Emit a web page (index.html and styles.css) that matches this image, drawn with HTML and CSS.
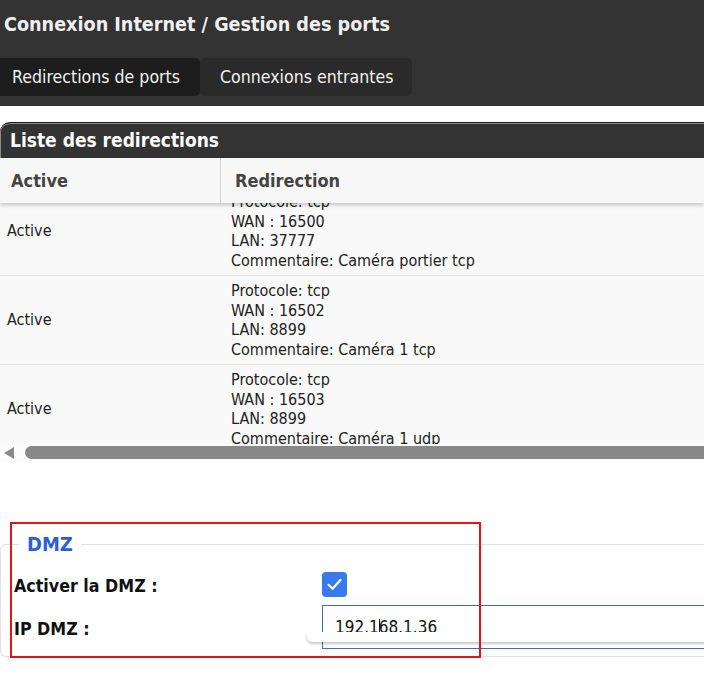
FILE: index.html
```html
<!DOCTYPE html>
<html lang="fr">
<head>
<meta charset="utf-8">
<title>Gestion des ports</title>
<link rel="stylesheet" href="styles.css">
</head>
<body>
<header class="topbar">
  <h1 class="title">Connexion Internet / Gestion des ports</h1>
  <nav class="tabs">
    <div class="tab tab-active">Redirections de ports</div>
    <div class="tab tab-other">Connexions entrantes</div>
  </nav>
</header>

<section class="panel">
  <div class="panel-head">Liste des redirections</div>
  <div class="thead">
    <div class="th th-active">Active</div>
    <div class="th th-redir">Redirection</div>
  </div>
  <div class="tbody-view">
    <div class="rows">
      <div class="row">
        <div class="cell-active">Active</div>
        <div class="cell-redir">Protocole: tcp<br>WAN : 16500<br>LAN: 37777<br>Commentaire: Caméra portier tcp</div>
      </div>
      <div class="row">
        <div class="cell-active">Active</div>
        <div class="cell-redir">Protocole: tcp<br>WAN : 16502<br>LAN: 8899<br>Commentaire: Caméra 1 tcp</div>
      </div>
      <div class="row">
        <div class="cell-active">Active</div>
        <div class="cell-redir">Protocole: tcp<br>WAN : 16503<br>LAN: 8899<br>Commentaire: Caméra 1 udp</div>
      </div>
    </div>
  </div>
  <div class="hscroll">
    <span class="hs-arrow"></span>
    <span class="hs-thumb"></span>
  </div>
</section>

<fieldset class="dmz">
  <legend class="dmz-legend">DMZ</legend>
  <div class="dmz-grid">
    <div class="dmz-label">Activer la DMZ :</div>
    <div class="dmz-control">
      <span class="checkbox">
        <svg width="25" height="25" viewBox="0 0 25 25"><path d="M6.5 12.8 L10.6 16.8 L18.6 7.8" fill="none" stroke="#fff" stroke-width="2.2" stroke-linecap="round" stroke-linejoin="round"/></svg>
      </span>
    </div>
    <div class="dmz-label">IP DMZ :</div>
    <div class="dmz-control">
      <div class="input-wrap">
        <div class="ip-input">192.1<span class="caret"></span>68.1.36</div>
        <div class="autocomplete"></div>
      </div>
    </div>
  </div>
</fieldset>

<div class="annot"></div>
</body>
</html>
```
FILE: styles.css
```css
html {
  overflow: hidden;
}
html, body {
  margin: 0;
  background: #fff;
}
body {
  position: relative;
  min-height: 683px;
  font-family: "DejaVu Sans Condensed", "DejaVu Sans", sans-serif;
  color: #222;
}

.topbar {
  background: #333;
  height: 106px;
}
.title {
  margin: 0;
  padding: 13px 0 0 4px;
  font-size: 19.6px;
  line-height: 24px;
  font-weight: bold;
  color: #f0f0f0;
}
.tabs {
  display: flex;
  margin-top: 21px;
}
.tab {
  height: 38px;
  line-height: 38px;
  font-size: 17.6px;
  color: #f2f2f2;
  box-sizing: border-box;
}
.tab-active {
  width: 200px;
  padding-left: 12px;
  background: #1d1d1d;
  border-radius: 0 5px 5px 0;
}
.tab-other {
  width: 212px;
  padding-left: 20px;
  background: #2a2a2a;
  border-radius: 5px;
}

.panel {
  margin-top: 16px;
}
.panel-head {
  height: 36px;
  line-height: 35px;
  background: #333;
  border-top: 1px solid #1c1c1c;
  border-radius: 10px 0 0 0;
  box-shadow: inset 0 1px 0 #8c8c8c, inset 1px 0 0 #8c8c8c;
  padding-left: 10px;
  font-size: 19px;
  font-weight: bold;
  color: #fff;
  box-sizing: border-box;
}
.thead {
  position: relative;
  z-index: 1;
  display: grid;
  grid-template-columns: 221px 1fr;
  height: 45px;
  background: #f7f7f7;
  box-shadow: 0 2px 4px rgba(0, 0, 0, 0.22);
}
.th {
  display: flex;
  align-items: center;
  font-size: 18px;
  font-weight: bold;
  color: #444;
}
.th-active {
  padding-left: 11px;
  border-right: 1px solid #d2d2d2;
}
.th-redir {
  padding-left: 14px;
}

.tbody-view {
  height: 241px;
  overflow: hidden;
  background: #fafafa;
}
.rows {
  margin-top: -16px;
}
.row {
  display: grid;
  grid-template-columns: 221px 1fr;
  padding: 5px 0 5px;
  border-bottom: 1px solid #e3e3e3;
  background: #f9f9f9;
  font-size: 16px;
  line-height: 19.5px;
  color: #222;
}
.cell-active {
  align-self: center;
  padding-left: 7px;
}
.cell-redir {
  padding-left: 10px;
}

.hscroll {
  display: flex;
  align-items: center;
  height: 17px;
  padding-left: 4px;
  background: #fcfcfc;
}
.hs-arrow {
  width: 0;
  height: 0;
  border-top: 6px solid transparent;
  border-bottom: 6px solid transparent;
  border-right: 10px solid #8a8a8a;
}
.hs-thumb {
  flex: 1;
  height: 13px;
  margin-left: 11px;
  background: #888;
  border-radius: 7px 0 0 7px;
}

.dmz {
  margin: 71px 0 0 0;
  width: 780px;
  box-sizing: border-box;
  border: 1px solid #e2e2e2;
  border-right: none;
  border-radius: 6px 0 0 6px;
  padding: 0 0 7px 13px;
  min-width: 0;
}
.dmz-legend {
  margin-left: 5px;
  padding: 0 8px;
  font-size: 20px;
  line-height: 24px;
  font-weight: bold;
  color: #2f5ed4;
}
.dmz-grid {
  display: grid;
  grid-template-columns: 308px 1fr;
  row-gap: 8px;
  align-items: center;
  margin-top: 16px;
}
.dmz-label {
  font-size: 17.7px;
  font-weight: bold;
  color: #111;
  padding-top: 3px;
}
.dmz-control {
  display: flex;
  align-items: center;
}
.checkbox {
  display: block;
  width: 25px;
  height: 25px;
  border-radius: 4px;
  background: #3a78f0;
}
.checkbox svg {
  display: block;
}
.input-wrap {
  position: relative;
  flex: 1;
}
.ip-input {
  display: flex;
  align-items: center;
  height: 44px;
  box-sizing: border-box;
  border: 1px solid #4469c9;
  border-right: none;
  padding-left: 12px;
  font-size: 17px;
  color: #111;
}
.caret {
  display: inline-block;
  width: 1px;
  height: 17px;
  margin-right: -1px;
  background: #111;
}
.autocomplete {
  position: absolute;
  left: -15px;
  top: 27px;
  width: 500px;
  height: 10px;
  background: #fff;
  border-radius: 0 0 0 5px;
  box-shadow: 0 2px 3px rgba(0, 0, 0, 0.22);
}

.annot {
  position: absolute;
  left: 10px;
  top: 522px;
  width: 471px;
  height: 136px;
  box-sizing: border-box;
  border: 2px solid #e0141c;
  pointer-events: none;
}
```
